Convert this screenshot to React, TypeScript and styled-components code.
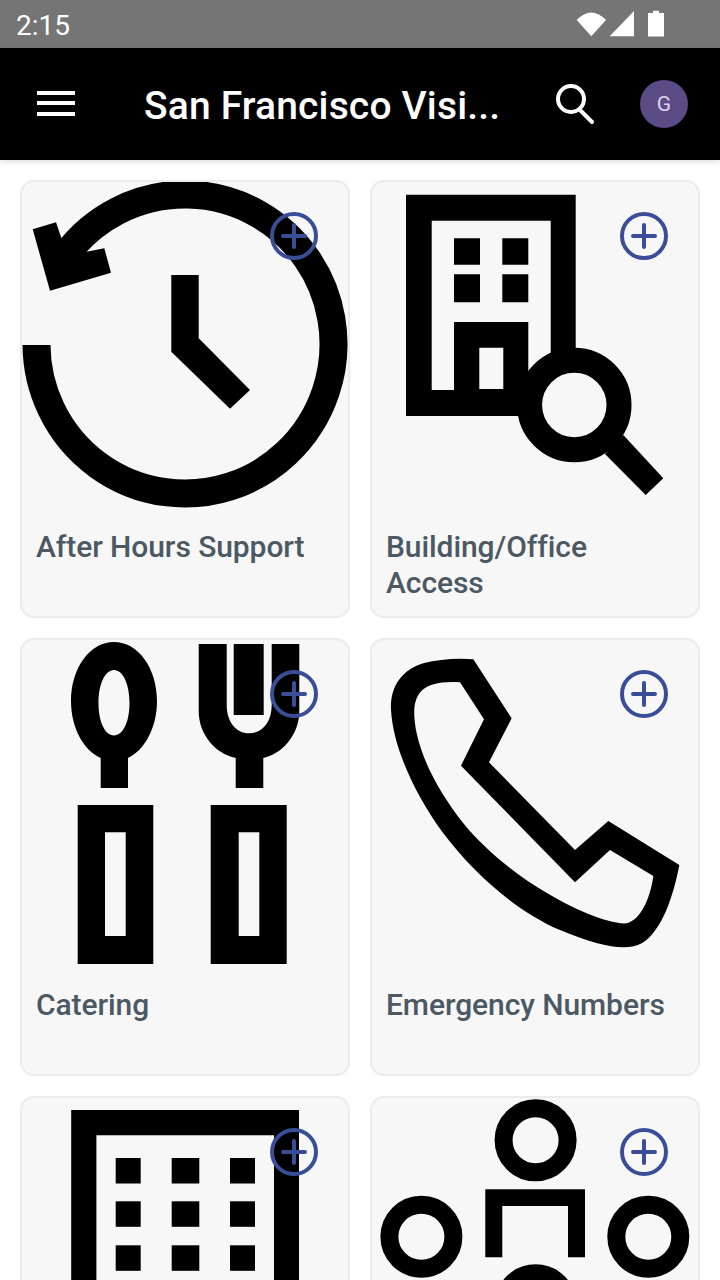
import React from 'react'
import styled, { createGlobalStyle } from 'styled-components'

const Global = createGlobalStyle`
  html, body {
    margin: 0;
    padding: 0;
    background: #fff;
  }
  * {
    box-sizing: border-box;
  }
`

const Page = styled.div`
  width: 720px;
  height: 1280px;
  overflow: hidden;
  font-family: Roboto, 'Liberation Sans', sans-serif;
`

const StatusBar = styled.div`
  height: 48px;
  background: #757575;
  color: #fff;
  display: flex;
  align-items: center;
  justify-content: space-between;
  padding: 0 0 0 16px;
  font-size: 28px;
  line-height: 48px;
`

const Clock = styled.span`
  padding-top: 3px;
`

const StatusIcons = styled.svg`
  display: block;
  width: 160px;
  height: 48px;
  fill: #fff;
`

const Header = styled.header`
  position: relative;
  height: 112px;
  background: #000;
  color: #fff;
  display: flex;
  align-items: center;
  padding-left: 36px;
  box-shadow: 0 2px 6px rgba(0, 0, 0, 0.14);
`

const MenuIcon = styled.svg`
  display: block;
  width: 40px;
  height: 28px;
  margin-right: 68px;
`

const Title = styled.h1`
  width: 355px;
  margin: 0;
  padding-top: 5px;
  font-size: 39px;
  font-weight: 500;
  line-height: 107px;
  letter-spacing: 0.15px;
  white-space: nowrap;
`

const SearchIcon = styled.svg`
  display: block;
  width: 44px;
  height: 44px;
  margin-left: 55px;
`

const Avatar = styled.div`
  width: 48px;
  height: 48px;
  margin-left: 42px;
  border-radius: 50%;
  background: #5b4c85;
  color: #ddd2ec;
  font-size: 21px;
  display: flex;
  align-items: center;
  justify-content: center;
`

const Grid = styled.main`
  display: grid;
  grid-template-columns: 330px 330px;
  grid-auto-rows: 438px;
  gap: 20px;
  padding: 20px;
`

const Card = styled.article`
  position: relative;
  border: 2px solid #ececec;
  border-radius: 14px;
  background: #f7f7f8;
`

const Pic = styled.svg`
  display: block;
  width: 326px;
  height: 346px;
  fill: #000;
`

const Label = styled.div`
  padding: 1px 14px 0;
  color: #4c5862;
  font-size: 30px;
  font-weight: 500;
  line-height: 36px;
  letter-spacing: -0.08px;
`

const AddButton = styled.svg`
  position: absolute;
  top: 30px;
  right: 30px;
  width: 48px;
  height: 48px;
  fill: none;
  stroke: #3a4e98;
`

const CARD_FILL = '#f7f7f8'

function AddIcon() {
  return (
    <AddButton viewBox="0 0 48 48">
      <circle cx="24" cy="24" r="22" strokeWidth="4" />
      <path d="M24 13v22M13 24h22" strokeWidth="4" strokeLinecap="round" />
    </AddButton>
  )
}

function HistoryIcon() {
  return (
    <Pic viewBox="22 182 326 346">
      <path
        d="M36.500 345A148.500 149.500 0 1 0 67.200 253"
        fill="none"
        stroke="#000"
        strokeWidth="28"
      />
      <path d="M32.700 229.300L56 222.300 61.700 239 86.700 251.700 104.300 248.300 111 272.700 50 290.700Z" />
      <path d="M171.300 275H198.700V338.300L250 390 230 408.700 171.300 351.700Z" />
    </Pic>
  )
}

function BuildingSearchIcon() {
  return (
    <Pic viewBox="372 182 326 346">
      <path
        fillRule="evenodd"
        d="M406 194.700H575.700V360L520 416H406ZM431.700 220.700V390H454V322H528.300V372L550.700 354V220.700ZM479.300 347.700V389H503.300V347.700Z"
      />
      <path d="M454 238.300h26v26.400h-26zM502.300 238.300h26v26.400h-26zM454 274.300h26v28h-26zM502.300 274.300h26v28h-26z" />
      <path d="M623.300 435L663.300 478.300 645.700 495 605 454Z" />
      <circle cx="574.300" cy="405" r="44.700" fill={CARD_FILL} stroke="#000" strokeWidth="25" />
    </Pic>
  )
}

function CateringIcon() {
  return (
    <Pic viewBox="22 640 326 346">
      <path
        fillRule="evenodd"
        d="M114 642C138 642 157 668 157 701C157 727 145 750 128 758V788H100.700V758C83 750 71 727 71 701C71 668 90 642 114 642ZM114 670C105 670 98.500 684 98.500 703C98.500 722 105 735.400 114 735.400C123 735.400 129.500 722 129.500 703C129.500 684 123 670 114 670Z"
      />
      <path d="M198.700 644H226.700V705C226.700 722 236 733.300 249.200 733.300C262.400 733.300 271.700 722 271.700 705V644H299.300V711C299.300 735 282 754 263.300 758V788H235.700V758C216 754 198.700 735 198.700 711Z" />
      <path d="M233.700 644h30v71h-30z" />
      <path
        fillRule="evenodd"
        d="M77.700 805h75.600v159H77.700ZM105 832.300V936h20.700V832.300Z"
      />
      <path
        fillRule="evenodd"
        d="M210.700 805h76v159h-76ZM238.700 832.300V936h20.600V832.300Z"
      />
    </Pic>
  )
}

function PhoneIcon() {
  return (
    <Pic viewBox="36 30 978 1038">
      <path
        fillRule="evenodd"
        d="M340 88L455 265 387 397 645 660 745 573 958 705C940 800 905 905 845 940C800 965 720 950 600 900C470 845 340 730 250 610C170 500 100 360 93 240C90 170 125 120 190 100C235 88 290 84 340 88ZM300 157C250 153 205 160 182 185C160 210 158 250 170 310C190 400 240 490 310 580C400 690 540 790 680 850C730 870 770 882 800 880C840 870 870 810 880 738L750 660 645 757 303 407 372 268Z"
      />
    </Pic>
  )
}

function OfficeIcon() {
  const cols = [115.7, 171.7, 230]
  const rows = [1158, 1201.3, 1245.3]
  return (
    <Pic viewBox="22 1098 326 346">
      <path
        fillRule="evenodd"
        d="M71.200 1110H299V1444H71.200ZM96.400 1135.300V1444H274V1135.300Z"
      />
      {rows.map(y =>
        cols.map(x => <rect key={`${x}-${y}`} x={x} y={y} width={x === cols[1] ? 27.6 : 25} height="25.500" />)
      )}
    </Pic>
  )
}

function PeopleIcon() {
  const ring = { fill: 'none', stroke: '#000', strokeWidth: 18 }
  return (
    <Pic viewBox="372 1098 326 346">
      <circle cx="535.600" cy="1140.300" r="32" {...ring} />
      <circle cx="421.400" cy="1236.700" r="32" {...ring} />
      <circle cx="648.300" cy="1236.700" r="32" {...ring} />
      <circle cx="535.600" cy="1305.300" r="32" {...ring} />
      <path d="M485.300 1189.300H585V1257.300H568V1206H502.300V1257.300H485.300Z" />
    </Pic>
  )
}

const items = [
  { label: 'After Hours Support', Icon: HistoryIcon },
  { label: 'Building/Office Access', Icon: BuildingSearchIcon },
  { label: 'Catering', Icon: CateringIcon },
  { label: 'Emergency Numbers', Icon: PhoneIcon },
  { label: '', Icon: OfficeIcon },
  { label: '', Icon: PeopleIcon },
]

export default function App() {
  return (
    <Page>
      <Global />
      <StatusBar>
        <Clock>2:15</Clock>
        <StatusIcons viewBox="560 0 160 48">
          <path d="M576.700 20Q591.300 5 606 20L591.300 36.300Z" />
          <path d="M609.700 36.300L634 11V36.300Z" />
          <path d="M653 13V10.700H659V13H664V36.500H648V13Z" />
        </StatusIcons>
      </StatusBar>
      <Header>
        <MenuIcon viewBox="0 0 40 28">
          <path d="M1 3h38M1 13h38M1 24h38" stroke="#fff" strokeWidth="4" />
        </MenuIcon>
        <Title>San Francisco Visi...</Title>
        <SearchIcon viewBox="0 0 44 44" fill="none" stroke="#fff" strokeWidth="4">
          <circle cx="17" cy="17" r="13" />
          <path d="M27 29L38 40" strokeLinecap="round" />
        </SearchIcon>
        <Avatar>G</Avatar>
      </Header>
      <Grid>
        {items.map(({ label, Icon }, i) => (
          <Card key={i}>
            <Icon />
            <AddIcon />
            {label && <Label>{label}</Label>}
          </Card>
        ))}
      </Grid>
    </Page>
  )
}
